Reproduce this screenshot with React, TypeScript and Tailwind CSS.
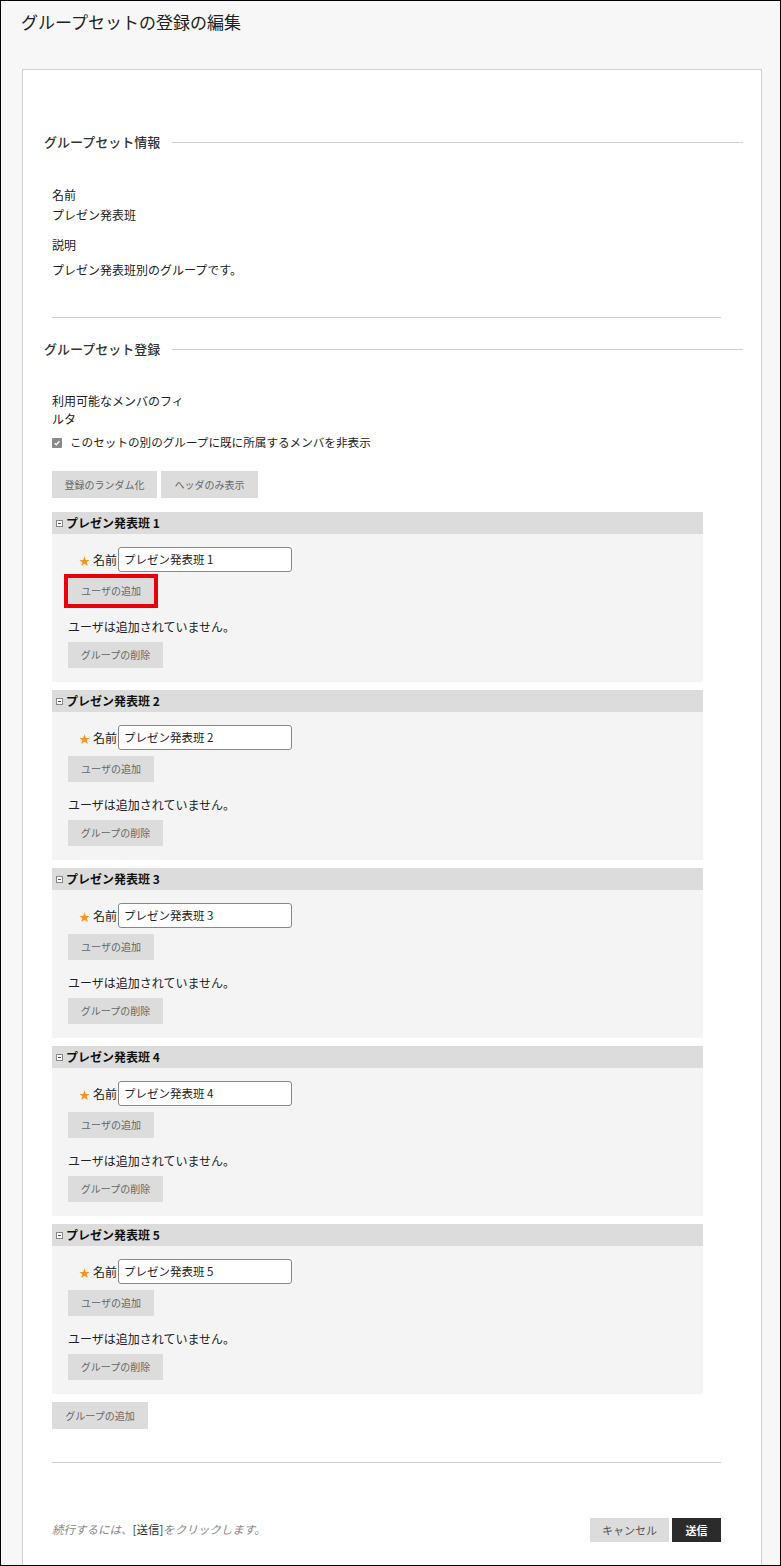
const font = { fontFamily: '"Noto Sans CJK JP", "Noto Sans", sans-serif' };

const groups = [1, 2, 3, 4, 5];

function GrayButton({
  label,
  className = "",
}: {
  label: string;
  className?: string;
}) {
  return (
    <button
      type="button"
      className={`whitespace-nowrap bg-[#dcdcdc] text-[10px] leading-none text-[#666] ${className}`}
    >
      {label}
    </button>
  );
}

function SectionHeading({ title }: { title: string }) {
  return (
    <div className="flex items-center gap-3">
      <h2 className="text-[13px] font-medium leading-[20px] text-[#333]">
        {title}
      </h2>
      <div className="h-px flex-1 bg-[#cfcfcf]"></div>
    </div>
  );
}

function GroupBox({ n }: { n: number }) {
  return (
    <div className="w-[651px]">
      <div className="flex h-[22px] items-center bg-[#dcdcdc] pl-[4px]">
        <span className="mr-[3px] flex h-[7px] w-[7px] items-center justify-center border border-[#888] bg-white">
          <span className="h-px w-[3px] bg-[#555]"></span>
        </span>
        <span className="text-[12px] font-bold text-[#111]">
          プレゼン発表班 {n}
        </span>
      </div>
      <div className="flex h-[148px] flex-col items-start bg-[#f4f4f4] pl-[16px] pt-[13px]">
        <div className="flex h-[25px] items-center">
          <svg viewBox="0 0 10 10" className="ml-[11px] mt-[4px] h-[11px] w-[11px]">
            <path
              d="M5 0.3 L6.2 3.6 L9.7 3.6 L6.9 5.7 L8 9.2 L5 7.1 L2 9.2 L3.1 5.7 L0.3 3.6 L3.8 3.6 Z"
              fill="#f7941d"
            />
          </svg>
          <span className="ml-[3px] mr-[1px] text-[12px] text-[#222]">名前</span>
          <div className="flex h-[25px] w-[174px] items-center rounded-[3px] border border-[#888] bg-white pl-[5px] text-[11.5px] text-[#222]">
            プレゼン発表班 {n}
          </div>
        </div>
        <GrayButton
          label="ユーザの追加"
          className={`mt-[6px] h-[26px] w-[86px] ${
            n === 1 ? "outline-4 outline-[#e8000b]" : ""
          }`}
        />
        <p className="mt-[14px] text-[12px] leading-[18px] text-[#222]">
          ユーザは追加されていません。
        </p>
        <GrayButton label="グループの削除" className="mt-[6px] h-[26px] w-[95px]" />
      </div>
    </div>
  );
}

export default function App() {
  return (
    <div
      style={font}
      className="h-[1566px] w-[781px] overflow-hidden border border-black bg-[#f7f7f7]"
    >
      <h1 className="pl-[20px] pt-[8px] text-[17px] leading-[26px] text-[#222]">
        グループセットの登録の編集
      </h1>
      <div className="ml-[21px] mr-[18px] mt-[34px] h-[1600px] border border-[#d0d0d0] bg-white pl-[21px] pr-[18px] pt-[62px]">
        <SectionHeading title="グループセット情報" />
        <div className="ml-[8px] mr-[22px] text-[12px] text-[#222]">
          <p className="mt-[33px] leading-[20px]">名前</p>
          <p className="leading-[20px]">プレゼン発表班</p>
          <p className="mt-[10px] leading-[20px]">説明</p>
          <p className="mt-[5px] leading-[20px]">
            プレゼン発表班別のグループです。
          </p>
          <div className="mt-[37px] h-px bg-[#d0d0d0]"></div>
        </div>

        <div className="mt-[21px]">
          <SectionHeading title="グループセット登録" />
        </div>

        <div className="ml-[8px] mr-[22px] text-[12px] text-[#222]">
          <p className="mt-[33px] w-[134px] leading-[18px]">
            利用可能なメンバのフィルタ
          </p>
          <label className="mt-[6px] flex h-[18px] items-center gap-[8px] text-[11.6px]">
            <span className="flex h-[10px] w-[10px] items-center justify-center rounded-[1px] bg-[#8a8a8a]">
              <svg viewBox="0 0 10 10" className="h-[8px] w-[8px]">
                <path
                  d="M2 5.2 L4.1 7.2 L8 2.8"
                  fill="none"
                  stroke="white"
                  strokeWidth="1.6"
                />
              </svg>
            </span>
            このセットの別のグループに既に所属するメンバを非表示
          </label>
          <div className="mt-[19px] flex gap-[4px]">
            <GrayButton label="登録のランダム化" className="h-[27px] w-[105px]" />
            <GrayButton label="ヘッダのみ表示" className="h-[27px] w-[97px]" />
          </div>

          <div className="mt-[14px] flex flex-col gap-[8px]">
            {groups.map((n) => (
              <GroupBox key={n} n={n} />
            ))}
          </div>

          <GrayButton label="グループの追加" className="mt-[8px] h-[27px] w-[96px]" />

          <div className="mt-[33px] h-px bg-[#d0d0d0]"></div>

          <div className="mt-[55px] flex items-center justify-between">
            <p className="text-[11.5px] italic text-[#888]">
              続行するには、<span className="not-italic text-[#333]">[送信]</span>
              をクリックします。
            </p>
            <div className="flex gap-[3px]">
              <button
                type="button"
                className="h-[24px] w-[79px] bg-[#dcdcdc] text-[11px] text-[#555]"
              >
                キャンセル
              </button>
              <button
                type="button"
                className="h-[24px] w-[49px] bg-[#2b2b2b] text-[11px] font-bold text-white"
              >
                送信
              </button>
            </div>
          </div>
        </div>
      </div>
    </div>
  );
}
